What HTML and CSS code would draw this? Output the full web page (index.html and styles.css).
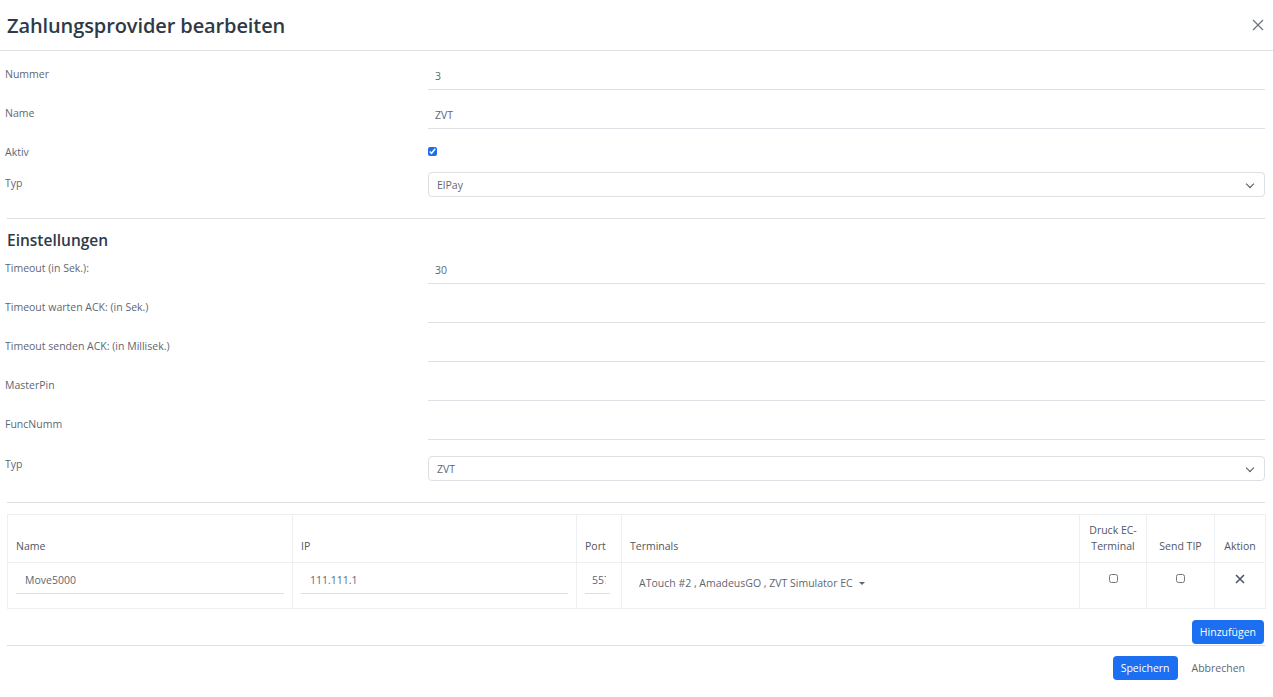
FILE: index.html
```html
<!DOCTYPE html>
<html lang="de">
<head>
    <meta charset="UTF-8">
    <meta name="viewport" content="width=device-width, initial-scale=1.0">
    <title>Zahlungsprovider bearbeiten</title>
    <link rel="stylesheet" href="styles.css">
</head>
<body>
    <div class="modal">
        <header class="modal-header">
            <h2>Zahlungsprovider bearbeiten</h2>
            <button class="btn-close" aria-label="Schließen">
                <svg width="12" height="12" viewBox="0 0 12 12"><path d="M1 1L11 11M11 1L1 11" stroke="#6b7280" stroke-width="1.2" fill="none"/></svg>
            </button>
        </header>

        <div class="modal-body">
            <!-- Allgemein -->
            <div class="form-row">
                <label>Nummer</label>
                <input class="line-input" type="text" value="3">
            </div>
            <div class="form-row">
                <label>Name</label>
                <input class="line-input" type="text" value="ZVT">
            </div>
            <div class="form-row check-row">
                <label>Aktiv</label>
                <div><input class="check" type="checkbox" checked></div>
            </div>
            <div class="form-row">
                <label>Typ</label>
                <div class="select">ElPay</div>
            </div>

            <hr>

            <!-- Einstellungen -->
            <h3>Einstellungen</h3>
            <div class="form-row">
                <label>Timeout (in Sek.):</label>
                <input class="line-input" type="text" value="30">
            </div>
            <div class="form-row">
                <label>Timeout warten ACK: (in Sek.)</label>
                <input class="line-input" type="text" value="">
            </div>
            <div class="form-row">
                <label>Timeout senden ACK: (in Millisek.)</label>
                <input class="line-input" type="text" value="">
            </div>
            <div class="form-row">
                <label>MasterPin</label>
                <input class="line-input" type="text" value="">
            </div>
            <div class="form-row">
                <label>FuncNumm</label>
                <input class="line-input" type="text" value="">
            </div>
            <div class="form-row select-row">
                <label>Typ</label>
                <div class="select">ZVT</div>
            </div>

            <hr>

            <!-- Terminals -->
            <table class="terminal-table">
                <colgroup>
                    <col style="width: 285px">
                    <col style="width: 284px">
                    <col style="width: 45px">
                    <col style="width: 458px">
                    <col style="width: 67px">
                    <col style="width: 68px">
                    <col style="width: 51px">
                </colgroup>
                <thead>
                    <tr>
                        <th>Name</th>
                        <th>IP</th>
                        <th>Port</th>
                        <th>Terminals</th>
                        <th class="center">Druck EC-<br>Terminal</th>
                        <th class="center">Send TIP</th>
                        <th class="center">Aktion</th>
                    </tr>
                </thead>
                <tbody>
                    <tr>
                        <td><input class="line-input cell-input" type="text" value="Move5000"></td>
                        <td><input class="line-input cell-input" type="text" value="111.111.1"></td>
                        <td><input class="line-input port-input" type="text" value="5577"></td>
                        <td><span class="multi">ATouch #2 , AmadeusGO , ZVT Simulator EC <span class="caret"></span></span></td>
                        <td class="center"><input class="check-empty" type="checkbox"></td>
                        <td class="center"><input class="check-empty" type="checkbox"></td>
                        <td class="center">
                            <svg width="10" height="10" viewBox="0 0 10 10"><path d="M1 1L9 9M9 1L1 9" stroke="#4b5563" stroke-width="1.6" fill="none"/></svg>
                        </td>
                    </tr>
                </tbody>
            </table>

            <div class="table-actions">
                <button class="btn btn-primary">Hinzufügen</button>
            </div>
        </div>

        <footer class="modal-footer">
            <button class="btn btn-primary">Speichern</button>
            <button class="btn btn-link">Abbrechen</button>
        </footer>
    </div>
</body>
</html>
```

FILE: styles.css
```css
/* General Reset */
* {
    margin: 0;
    padding: 0;
    box-sizing: border-box;
}

body, html {
    font-family: 'Open Sans', 'Noto Sans', sans-serif;
    background-color: #ffffff;
    color: #5f6672;
}

/* Modal */
.modal {
    width: 1273px;
}

.modal-header {
    display: flex;
    justify-content: space-between;
    align-items: center;
    height: 51px;
    padding: 0 9px 0 7px;
    border-bottom: 1px solid #dfe1e6;
}

.modal-header h2 {
    font-size: 20px;
    font-weight: 600;
    color: #2e3a48;
    letter-spacing: -0.1px;
}

.btn-close {
    background: none;
    border: none;
    width: 12px;
    height: 12px;
    cursor: pointer;
}

.modal-body {
    padding: 12px 8px 0 5px;
}

/* Form rows */
.form-row {
    display: grid;
    grid-template-columns: 423px 1fr;
    margin-bottom: 12px;
    font-size: 10.5px;
}

.form-row label {
    padding-top: 3px;
    line-height: 16px;
}

.line-input {
    height: 27px;
    width: 100%;
    border: none;
    border-bottom: 1px solid #dcdfe4;
    padding: 0 7px;
    font-family: inherit;
    font-size: 10.5px;
    color: #5f6672;
    outline: none;
    background: transparent;
}

.check-row > div {
    padding-top: 6px;
    height: 19px;
}

.check {
    width: 9px;
    height: 9px;
    accent-color: #1c6fe8;
    display: block;
}

.select {
    position: relative;
    height: 25px;
    border: 1px solid #dcdfe4;
    border-radius: 4px;
    padding: 0 8px;
    line-height: 24px;
    font-size: 10.5px;
    color: #5f6672;
}

.select::after {
    content: "";
    position: absolute;
    right: 11px;
    top: 8px;
    width: 5px;
    height: 5px;
    border-right: 1.2px solid #4b5260;
    border-bottom: 1.2px solid #4b5260;
    transform: rotate(45deg);
}

.select-row {
    margin-top: 16px;
    margin-bottom: 13px;
}

.select-row label {
    padding-top: 0;
}

hr {
    border: none;
    border-top: 1px solid #dcdfe4;
    margin: 21px 0 0 2px;
}

h3 {
    font-size: 15.5px;
    font-weight: 600;
    color: #2e3a48;
    margin: 11px 0 7px 2px;
    line-height: 20px;
}

/* Terminals table */
.terminal-table {
    table-layout: fixed;
    border-collapse: collapse;
    margin: 11px 0 0 2px;
    width: 1258px;
    font-size: 10.5px;
}

.terminal-table th,
.terminal-table td {
    border: 1px solid #edf0f3;
    padding: 0 8px;
    text-align: left;
}

.terminal-table th {
    height: 48px;
    vertical-align: bottom;
    padding-bottom: 8px;
    font-weight: 400;
    color: #4f5663;
    line-height: 16px;
}

.terminal-table td {
    height: 46px;
    vertical-align: top;
    padding-top: 3px;
}

.terminal-table .center {
    text-align: center;
    padding-left: 0;
    padding-right: 0;
}

.cell-input {
    height: 28px;
    padding: 0 9px;
}

.port-input {
    height: 28px;
    width: 25px;
    padding: 0 4px 0 7px;
    overflow: hidden;
}

.multi {
    display: inline-block;
    padding: 10px 0 0 9px;
    color: #5f6672;
}

.caret {
    display: inline-block;
    margin-left: 4px;
    vertical-align: 2px;
    border-left: 3px solid transparent;
    border-right: 3px solid transparent;
    border-top: 3px solid #5f6672;
}

.check-empty {
    margin-top: 8px;
    width: 9px;
    height: 9px;
}

.terminal-table td svg {
    margin-top: 8px;
}

.table-actions {
    display: flex;
    justify-content: flex-end;
    padding: 11px 1px 1px 0;
    border-bottom: 1px solid #dcdfe4;
    margin-left: 2px;
}

/* Buttons */
.btn {
    font-family: inherit;
    font-size: 10.5px;
    border: none;
    border-radius: 4px;
    height: 24px;
    padding: 0 8px;
    cursor: pointer;
}

.btn-primary {
    background-color: #1b6ff0;
    color: #ffffff;
}

.btn-link {
    background: none;
    color: #5f6672;
    padding: 0 14px;
}

.modal-footer {
    display: flex;
    justify-content: flex-end;
    padding: 10px 14px 0 0;
}
```
